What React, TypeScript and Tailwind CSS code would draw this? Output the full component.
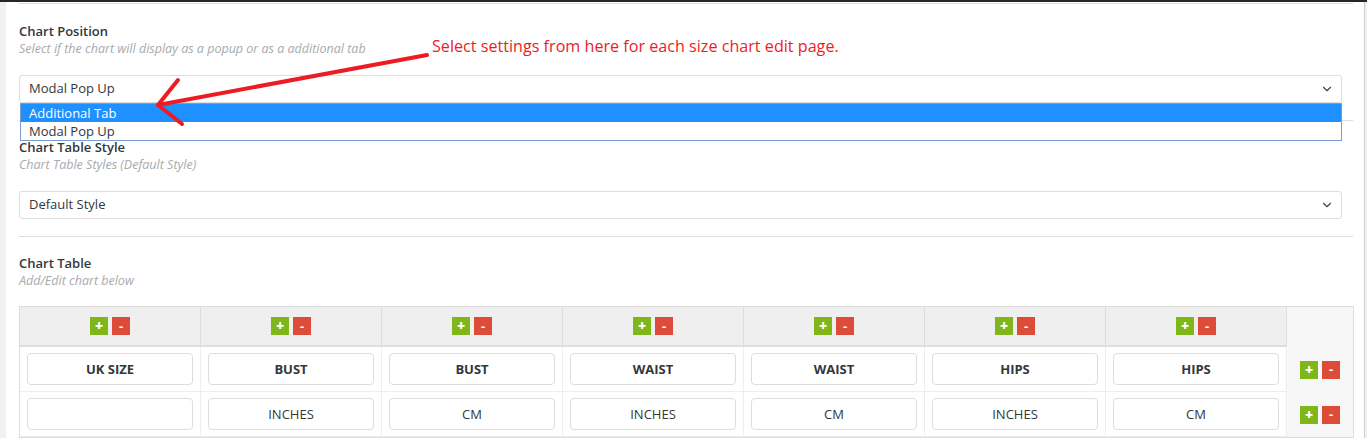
import { ChevronDown } from "lucide-react";

const columns = [
  { head: "UK SIZE", unit: "" },
  { head: "BUST", unit: "INCHES" },
  { head: "BUST", unit: "CM" },
  { head: "WAIST", unit: "INCHES" },
  { head: "WAIST", unit: "CM" },
  { head: "HIPS", unit: "INCHES" },
  { head: "HIPS", unit: "CM" },
];

function AddRemove() {
  return (
    <div className="flex gap-[4px]">
      <button className="w-[18px] h-[18px] bg-[#7fb619] text-white text-[14px] font-extrabold leading-none flex items-center justify-center">
        +
      </button>
      <button className="w-[18px] h-[18px] bg-[#dd4b39] text-white text-[13px] font-bold leading-none flex items-center justify-center">
        -
      </button>
    </div>
  );
}

function Field({ title, hint }: { title: string; hint: string }) {
  return (
    <>
      <h3 className="text-[13px] leading-[18px] font-semibold text-[#32373c]">{title}</h3>
      <p className="text-[12.5px] leading-[18px] italic text-[#a7aaad]">{hint}</p>
    </>
  );
}

function SelectBox({ value }: { value: string }) {
  return (
    <div className="mt-[17px] w-[1323px] h-[28px] border border-[#ddd] rounded-[3px] bg-white flex items-center justify-between pl-[9px] pr-[7px] text-[13px] text-[#32373c]">
      <span>{value}</span>
      <ChevronDown className="w-[14px] h-[14px] text-[#444]" strokeWidth={2} />
    </div>
  );
}

export default function App() {
  return (
    <div className="w-[1367px] h-[438px] overflow-hidden bg-[#f1f1f1] font-['Open_Sans',sans-serif]">
      <div className="h-[2px] bg-[#23282d]" />
      <div className="ml-[6px] mr-[2px] h-[436px] bg-white border-r border-[#ccc] relative">
        <div className="pl-[13px] w-[1347px] pt-[1px]">
          <div className="h-px bg-[#ddd]" />

          {/* Chart position */}
          <section className="pt-[18px] relative">
            <Field title="Chart Position" hint="Select if the chart will display as a popup or as a additional tab" />
            <SelectBox value="Modal Pop Up" />
            <div className="absolute left-px top-[99px] w-[1322px] border border-[#7a9cd4] bg-white z-10 text-[13px] leading-[18px]">
              <div className="bg-[#1e90ff] text-white pl-[8px]">Additional Tab</div>
              <div className="text-[#32373c] pl-[8px]">Modal Pop Up</div>
            </div>
            <div className="h-[17px]" />
            <div className="h-px bg-[#ddd]" />
          </section>

          {/* Table style */}
          <section className="pt-[17px]">
            <Field title="Chart Table Style" hint="Chart Table Styles (Default Style)" />
            <SelectBox value="Default Style" />
            <div className="h-[17px]" />
            <div className="h-px bg-[#ddd]" />
          </section>

          {/* Chart table */}
          <section className="pt-[17px]">
            <Field title="Chart Table" hint="Add/Edit chart below" />
            <div className="mt-[16px] flex border border-[#ddd] w-[1335px]">
              <div className="grid grid-cols-[repeat(7,181px)]">
                {columns.map((c, i) => (
                  <div
                    key={"h" + i}
                    className="h-[40px] bg-[#efefef] border-b-2 border-[#ddd] border-r flex items-center justify-center"
                  >
                    <AddRemove />
                  </div>
                ))}
                {columns.map((c, i) => (
                  <div key={"a" + i} className="h-[45px] border-r border-b border-[#eee] flex items-center justify-center">
                    <div className="w-[166px] h-[32px] pt-[2px] border border-[#ddd] rounded-[4px] flex items-center justify-center text-[13px] font-bold text-[#32373c]">
                      {c.head}
                    </div>
                  </div>
                ))}
                {columns.map((c, i) => (
                  <div key={"b" + i} className="h-[45px] border-r border-b border-[#eee] flex items-center justify-center">
                    <div className="w-[166px] h-[32px] pt-[2px] border border-[#ddd] rounded-[4px] flex items-center justify-center text-[13px] text-[#32373c]">
                      {c.unit}
                    </div>
                  </div>
                ))}
              </div>
              <div className="w-[66px] bg-[#f7f7f7] flex flex-col items-center">
                <div className="h-[40px]" />
                <div className="h-[45px] flex items-center">
                  <AddRemove />
                </div>
                <div className="h-[45px] flex items-center">
                  <AddRemove />
                </div>
              </div>
            </div>
          </section>
        </div>

        {/* Annotation arrow and note */}
        <svg
          className="absolute left-0 top-0 pointer-events-none z-20"
          width="1360"
          height="140"
          viewBox="0 0 1360 140"
        >
          <g stroke="#ed1c24" strokeWidth="4" strokeLinecap="round" fill="none">
            <path d="M421 53 L152 103" />
            <path d="M152 103 L172 78" />
            <path d="M152 103 L176 122" />
          </g>
        </svg>
        <div className="absolute left-[426px] top-[33px] z-20 text-[16.15px] leading-[22px] text-[#ed1c24]">
          Select settings from here for each size chart edit page.
        </div>
      </div>
    </div>
  );
}
